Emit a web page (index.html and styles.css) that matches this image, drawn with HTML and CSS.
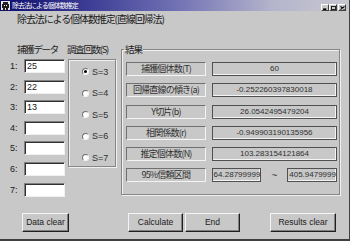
FILE: index.html
```html
<!DOCTYPE html>
<html lang="ja">
<head>
    <meta charset="UTF-8">
    <title>除去法による個体数推定</title>
    <link rel="stylesheet" href="styles.css">
</head>
<body>
    <div class="window">
        <div class="titlebar">
            <svg class="app-icon" width="9" height="9" viewBox="0 0 9 9">
                <rect x="0" y="0" width="9" height="9" fill="#e8e8e8"/>
                <path d="M2 1h5v2H2zM1 3h7v4H1zM2 7h2v2H2zM5 7h2v2H5z" fill="#202020"/>
                <path d="M3 4h1v1H3zM5 4h1v1H5z" fill="#ffffff"/>
            </svg>
            <span class="title">除去法による個体数推定</span>
            <div class="controls">
                <span class="ctl"><svg width="6" height="5" viewBox="0 0 6 5"><rect x="0" y="3" width="4" height="2" fill="#000"/></svg></span>
                <span class="ctl"><svg width="6" height="5" viewBox="0 0 6 5"><rect x="0.5" y="0.5" width="5" height="4" fill="none" stroke="#000"/></svg></span>
                <span class="ctl ctl-close"><svg width="6" height="5" viewBox="0 0 6 5"><path d="M0.5 0.5L5.5 4.5M5.5 0.5L0.5 4.5" stroke="#000" stroke-width="1.3"/></svg></span>
            </div>
        </div>

        <h1 class="heading">除去法による個体数推定(直線回帰法)</h1>

        <div class="panels">
            <div class="data-col">
                <div class="col-head">捕獲データ</div>
                <div class="data-rows">
                    <div class="data-row"><span class="num">1:</span><input class="field" type="text" value="25"></div>
                    <div class="data-row"><span class="num">2:</span><input class="field" type="text" value="22"></div>
                    <div class="data-row"><span class="num">3:</span><input class="field" type="text" value="13"></div>
                    <div class="data-row"><span class="num">4:</span><input class="field" type="text" value=""></div>
                    <div class="data-row"><span class="num">5:</span><input class="field" type="text" value=""></div>
                    <div class="data-row"><span class="num">6:</span><input class="field" type="text" value=""></div>
                    <div class="data-row"><span class="num">7:</span><input class="field" type="text" value=""></div>
                </div>
            </div>

            <div class="count-col">
                <div class="col-head">調査回数(S)</div>
                <div class="radio-box">
                    <div class="radio"><span class="dot checked"></span>S=3</div>
                    <div class="radio"><span class="dot"></span>S=4</div>
                    <div class="radio"><span class="dot"></span>S=5</div>
                    <div class="radio"><span class="dot"></span>S=6</div>
                    <div class="radio"><span class="dot"></span>S=7</div>
                </div>
            </div>

            <fieldset class="results">
                <legend>結果</legend>
                <div class="res-row"><span class="res-label">捕獲個体数(T)</span><span class="res-value">60</span></div>
                <div class="res-row"><span class="res-label">回帰直線の傾き(a)</span><span class="res-value">-0.252260397830018</span></div>
                <div class="res-row"><span class="res-label">Y切片(b)</span><span class="res-value">26.0542495479204</span></div>
                <div class="res-row"><span class="res-label">相関係数(r)</span><span class="res-value">-0.949903190135956</span></div>
                <div class="res-row"><span class="res-label">推定個体数(N)</span><span class="res-value">103.283154121864</span></div>
                <div class="res-row">
                    <span class="res-label">95%信頼区間</span>
                    <span class="res-value ci">64.28799999</span>
                    <span class="tilde">~</span>
                    <span class="res-value ci">405.9479999</span>
                </div>
            </fieldset>
        </div>

        <div class="buttons">
            <button type="button" class="btn btn-data">Data clear</button>
            <button type="button" class="btn btn-calc">Calculate</button>
            <button type="button" class="btn btn-end">End</button>
            <button type="button" class="btn btn-results">Results clear</button>
        </div>
    </div>
</body>
</html>
```

FILE: styles.css
```css
body {
    margin: 0;
    font-family: "Noto Sans CJK JP", sans-serif;
    color: #000;
}
.window {
    width: 350px;
    height: 241px;
    box-sizing: border-box;
    background-color: #c8c8c8;
    border-right: 1px solid #404040;
    border-bottom: 2px solid #404040;
    overflow: hidden;
}
.titlebar {
    height: 11px;
    display: flex;
    align-items: center;
    background: linear-gradient(90deg, #0c0c6c 0%, #3c3c94 25%, #7070b4 50%, #b4b4cc 78%, #c8c8d0 100%);
}
.app-icon {
    margin-left: 1px;
    flex: none;
}
.title {
    margin-left: 2px;
    color: #fff;
    font-size: 7px;
    line-height: 11px;
    letter-spacing: -1px;
}
.controls {
    margin-left: auto;
    margin-right: 3px;
    margin-top: 4px;
    display: flex;
}
.ctl {
    width: 8px;
    height: 7px;
    box-sizing: border-box;
    background-color: #c8c8c8;
    border: 1px solid;
    border-color: #fff #404040 #404040 #fff;
    display: flex;
    align-items: center;
    justify-content: center;
}
.ctl svg {
    width: 5px;
    height: 4px;
}
.ctl-close {
    margin-left: 1px;
}
.heading {
    margin: 1px 0 0 17px;
    font-size: 10px;
    font-weight: normal;
    line-height: 13px;
    letter-spacing: -1.1px;
    color: #202020;
}
.panels {
    display: flex;
    align-items: flex-start;
    margin-top: 18px;
    padding-left: 10px;
}
.col-head {
    font-size: 9.5px;
    line-height: 12px;
    height: 12px;
    letter-spacing: -1.3px;
    margin-bottom: 4px;
    white-space: nowrap;
    color: #202020;
}
.data-col .col-head {
    margin-left: 7px;
}
.data-rows {
    display: flex;
    flex-direction: column;
    gap: 6.6px;
}
.data-row {
    display: flex;
    align-items: center;
}
.num {
    width: 14px;
    font-family: "Liberation Sans", sans-serif;
    font-size: 9px;
    color: #202020;
}
.field {
    width: 41px;
    height: 14px;
    box-sizing: border-box;
    margin: 0;
    padding: 0 0 0 2px;
    background-color: #fff;
    border: 1px solid;
    border-color: #808080 #f0f0f0 #f0f0f0 #808080;
    box-shadow: inset 1px 1px 0 #303030;
    font-family: "Liberation Sans", sans-serif;
    font-size: 9px;
    color: #202020;
    outline: none;
}
.count-col {
    margin-left: 2px;
}
.radio-box {
    width: 48px;
    box-sizing: border-box;
    margin-left: 1px;
    padding: 1px 0 0 13px;
    height: 108px;
    border: 1px solid #868686;
    box-shadow: 1px 1px 0 #f0f0f0, inset 1px 1px 0 #f0f0f0;
}
.radio {
    display: flex;
    align-items: center;
    height: 21.5px;
    font-family: "Liberation Sans", sans-serif;
    font-size: 9px;
    color: #303030;
}
.dot {
    width: 7px;
    height: 7px;
    box-sizing: border-box;
    border-radius: 50%;
    border: 1px solid;
    border-color: #707070 #f4f4f4 #f4f4f4 #707070;
    background-color: #fff;
    margin-right: 3px;
    display: flex;
    align-items: center;
    justify-content: center;
}
.dot.checked::after {
    content: "";
    width: 3px;
    height: 3px;
    border-radius: 50%;
    background-color: #000;
}
.results {
    margin: 0 0 0 5px;
    padding: 7px 2px 12px 4px;
    min-inline-size: 0;
    width: 219px;
    box-sizing: border-box;
    border: 1px solid #868686;
    box-shadow: 1px 1px 0 #f0f0f0, inset 1px 1px 0 #f0f0f0;
    display: flex;
    flex-direction: column;
    gap: 7.3px;
}
.results legend {
    font-size: 9.5px;
    line-height: 12px;
    letter-spacing: -1px;
    padding: 0 1px;
    margin-left: -2px;
    color: #202020;
}
.res-row {
    display: flex;
    align-items: center;
    height: 14px;
}
.res-label {
    width: 80px;
    height: 14px;
    box-sizing: border-box;
    border: 1px solid;
    border-color: #707070 #f4f4f4 #f4f4f4 #707070;
    font-size: 9px;
    line-height: 12px;
    letter-spacing: -0.8px;
    text-align: center;
    color: #303030;
    white-space: nowrap;
}
.res-value {
    width: 125px;
    height: 14px;
    box-sizing: border-box;
    margin-left: 6px;
    border: 1px solid #505050;
    box-shadow: inset -1px -1px 0 #f4f4f4;
    font-family: "Liberation Sans", sans-serif;
    font-size: 8px;
    line-height: 12px;
    text-align: center;
    color: #303030;
}
.res-value.ci {
    width: 50px;
    text-align: left;
    padding-left: 1px;
}
.tilde {
    width: 26px;
    text-align: center;
    font-family: "Liberation Sans", sans-serif;
    font-size: 10px;
    color: #404040;
}
.tilde + .ci {
    margin-left: 0;
}
.buttons {
    display: flex;
    margin-top: 16px;
    padding-left: 22px;
}
.btn {
    height: 19px;
    margin: 0;
    padding: 0;
    background-color: #c8c8c8;
    border: 1px solid;
    border-color: #f4f4f4 #202020 #202020 #f4f4f4;
    box-shadow: inset -1px -1px 0 #808080;
    font-family: "Liberation Sans", sans-serif;
    font-size: 8.5px;
    color: #202020;
}
.btn-data {
    width: 47px;
}
.btn-calc {
    width: 55px;
    margin-left: 59px;
}
.btn-end {
    width: 55px;
    margin-left: 2px;
}
.btn-results {
    width: 66px;
    margin-left: 30px;
}
```
